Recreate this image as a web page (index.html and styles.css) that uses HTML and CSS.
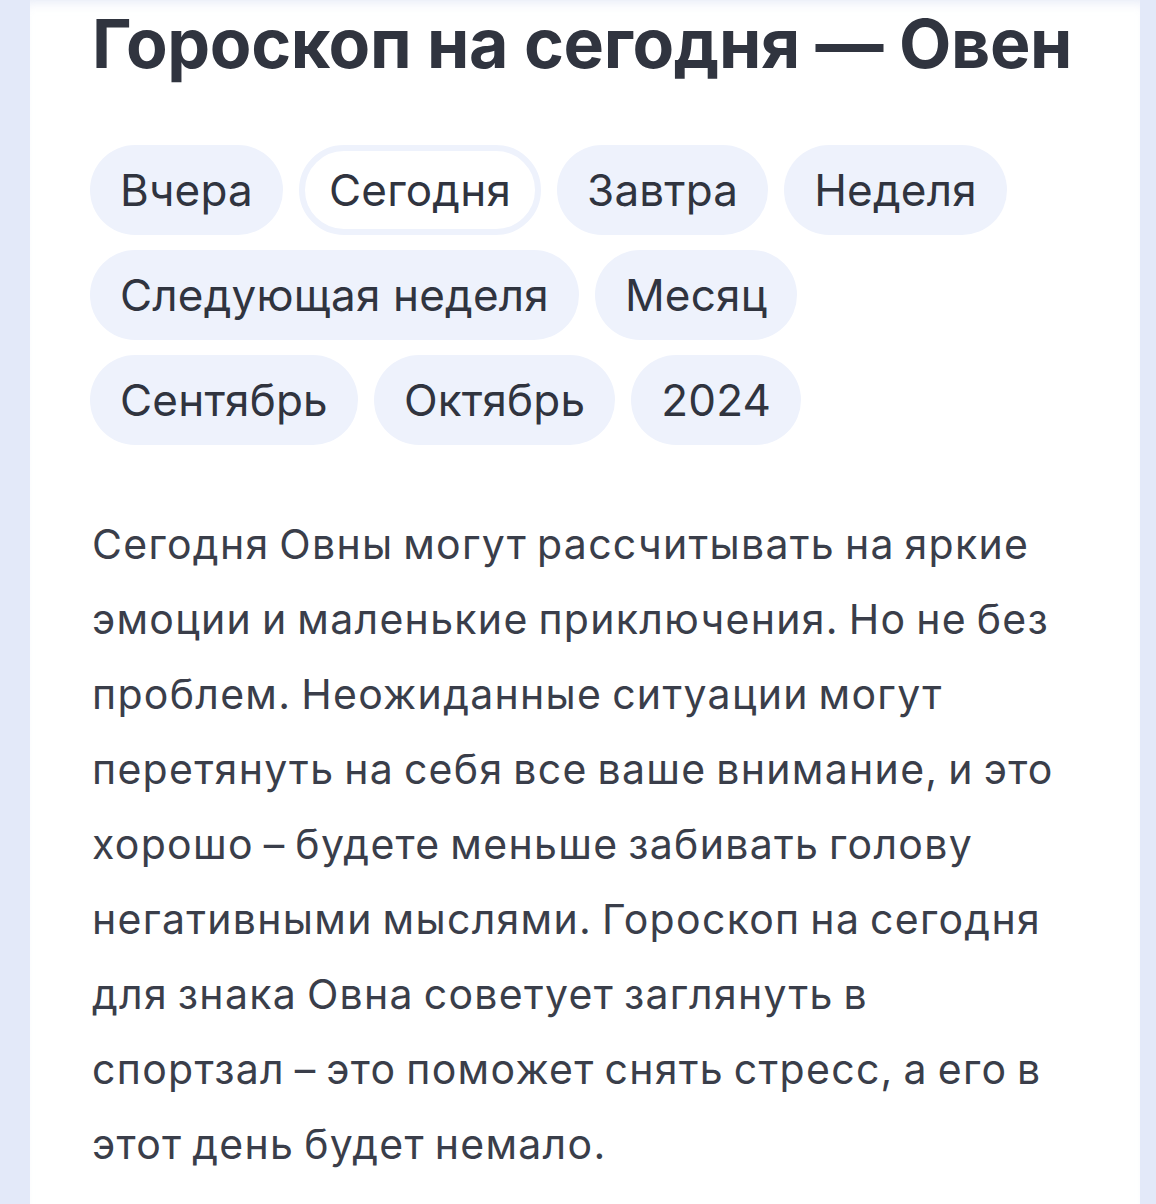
FILE: index.html
```html
<!DOCTYPE html>
<html lang="ru">
<head>
<meta charset="utf-8">
<link rel="stylesheet" href="styles.css">
</head>
<body>
<main class="card">
  <h1 class="title">Гороскоп на сегодня — Овен</h1>
  <nav class="pills">
    <a class="pill">Вчера</a>
    <a class="pill pill-active">Сегодня</a>
    <a class="pill">Завтра</a>
    <a class="pill">Неделя</a>
    <a class="pill">Следующая неделя</a>
    <a class="pill">Месяц</a>
    <a class="pill">Сентябрь</a>
    <a class="pill">Октябрь</a>
    <a class="pill">2024</a>
  </nav>
  <p class="text">Сегодня Овны могут рассчитывать на яркие эмоции и маленькие приключения. Но не без проблем. Неожиданные ситуации могут перетянуть на себя все ваше внимание, и это хорошо – будете меньше забивать голову негативными мыслями. Гороскоп на сегодня для знака Овна советует заглянуть в спортзал – это поможет снять стресс, а его в этот день будет немало.</p>
</main>
</body>
</html>
```

FILE: styles.css
```css
html, body {
  margin: 0;
  padding: 0;
}
body {
  background: #e3e9f9;
  font-family: Inter, "Noto Sans", sans-serif;
  color: #30343f;
  height: 1204px;
  overflow: hidden;
}
.card {
  margin-left: 30px;
  width: 1110px;
  height: 1204px;
  background: #ffffff;
  box-sizing: border-box;
  padding: 0 80px 0 62px;
  box-shadow: inset 0 10px 12px -8px rgba(210, 218, 240, 0.6);
}
.title {
  margin: 0;
  padding-top: 3px;
  font-size: 68px;
  line-height: 80px;
  font-weight: 700;
  letter-spacing: -0.35px;
  color: #30343f;
  white-space: nowrap;
}
.pills {
  display: flex;
  flex-wrap: wrap;
  gap: 15px 16px;
  margin-top: 62px;
  margin-left: -2px;
}
.pill {
  display: flex;
  align-items: center;
  height: 90px;
  box-sizing: border-box;
  padding: 0 30px;
  border-radius: 45px;
  background: #eef2fc;
  font-size: 44px;
  letter-spacing: 0.2px;
  color: #30343f;
}
.pill-active {
  background: #ffffff;
  border: 6px solid #eef2fc;
  padding: 0 24px;
}
.text {
  margin: 62px 0 0;
  font-size: 41px;
  line-height: 75px;
  letter-spacing: 1.3px;
  word-spacing: -3px;
  font-weight: 400;
  color: #3a3e4a;
}
```
